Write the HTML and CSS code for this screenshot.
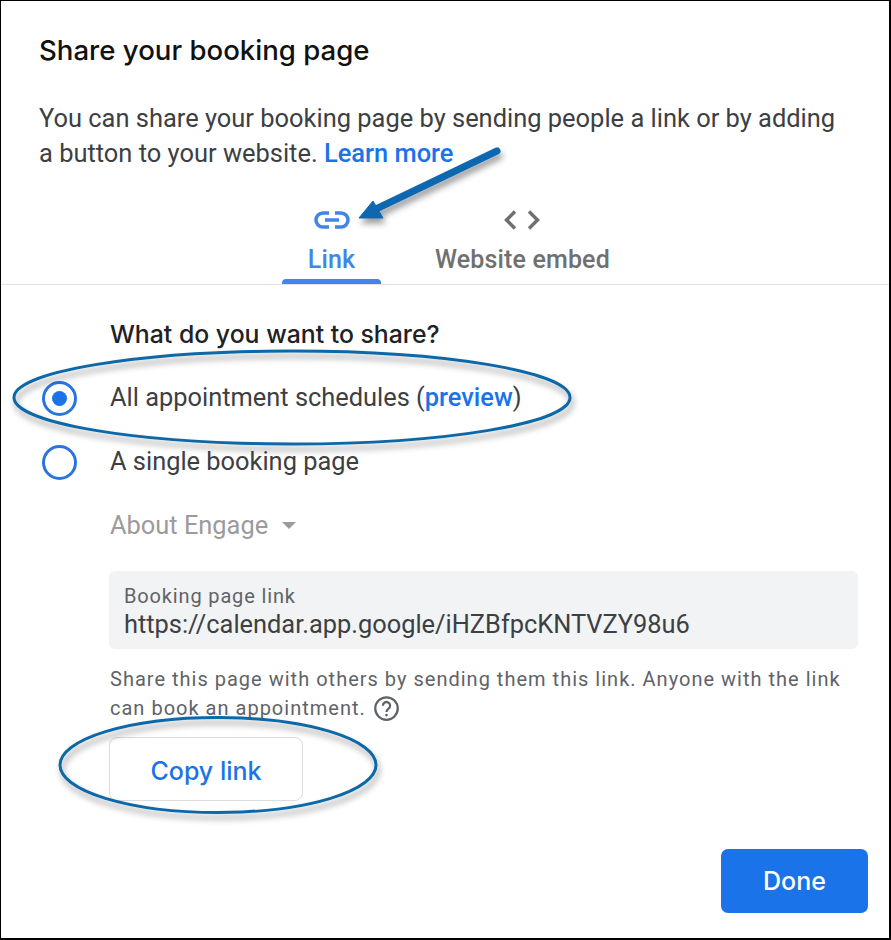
FILE: index.html
```html
<!DOCTYPE html>
<html>
<head>
  <meta charset="utf-8">
  <title>Share your booking page</title>
  <link rel="stylesheet" href="styles.css">
</head>
<body>
  <div class="dialog">
    <div class="intro">
      <h2 class="title">Share your booking page</h2>
      <p class="lead">You can share your booking page by sending people a link or by adding a button to your website. <a class="link" href="#">Learn more</a></p>
    </div>

    <div class="tabs">
      <div class="tab tab-active">
        <svg class="tab-icon" viewBox="0 0 36 20" width="36" height="20">
          <path d="M15 3H9a7 7 0 0 0 0 14h6M21 3h6a7 7 0 0 1 0 14h-6M11 10h14" fill="none" stroke="#4285ea" stroke-width="3.600"/>
        </svg>
        <span>Link</span>
      </div>
      <div class="tab">
        <svg class="tab-icon" viewBox="0 0 36 20" width="36" height="20">
          <path d="M11 1.500L2.500 10l8.500 8.500M25 1.500l8.500 8.500-8.500 8.500" fill="none" stroke="#6f6f6f" stroke-width="3.400"/>
        </svg>
        <span>Website embed</span>
      </div>
    </div>

    <div class="content">
      <h3 class="question">What do you want to share?</h3>

      <div class="option option-first">
        <span class="radio radio-on"></span>
        <span>All appointment schedules (<a class="link" href="#">preview</a>)</span>
      </div>
      <div class="option">
        <span class="radio"></span>
        <span>A single booking page</span>
      </div>

      <div class="select">About Engage <span class="caret"></span></div>

      <div class="link-field">
        <div class="field-label">Booking page link</div>
        <div class="field-value">https://calendar.app.google/iHZBfpcKNTVZY98u6</div>
      </div>

      <p class="hint">Share this page with others by sending them this link. Anyone with the link can book an appointment.
        <svg class="help" viewBox="0 0 24 24" width="27" height="27">
          <circle cx="12" cy="12" r="10" fill="none" stroke="#5f6368" stroke-width="2"/>
          <path d="M8.800 9.500a3.200 3.200 0 1 1 5 2.600c-1.100.8-1.800 1.400-1.800 2.900" fill="none" stroke="#5f6368" stroke-width="2"/>
          <circle cx="12" cy="17.800" r="1.200" fill="#5f6368"/>
        </svg>
      </p>

      <button class="btn-copy">Copy link</button>
    </div>

    <div class="footer">
      <button class="btn-done">Done</button>
    </div>

    <svg class="notes" viewBox="0 0 891 940" width="891" height="940">
      <defs>
        <filter id="soft" x="-20%" y="-40%" width="140%" height="200%">
          <feDropShadow dx="2" dy="5" stdDeviation="3" flood-color="#000" flood-opacity="0.4"/>
        </filter>
      </defs>
      <g filter="url(#soft)">
        <path d="M497 151L376 209" fill="none" stroke="#0f67b0" stroke-width="7" stroke-linecap="round"/>
        <path d="M359 218L373 201L383 218Z" fill="#0f67b0" stroke="#0f67b0" stroke-width="1"/>
        <ellipse cx="292" cy="397.500" rx="278" ry="46.500" fill="none" stroke="#0f67a8" stroke-width="3"/>
        <ellipse cx="218" cy="765" rx="158" ry="47.500" fill="none" stroke="#0f67a8" stroke-width="3"/>
      </g>
    </svg>
  </div>
</body>
</html>
```

FILE: styles.css
```css
body {
  margin: 0;
  background: #fff;
  font-family: Roboto, "Liberation Sans", sans-serif;
}
.dialog {
  position: relative;
  box-sizing: border-box;
  width: 891px;
  height: 940px;
  background: #fff;
  border: solid #000;
  border-width: 1px 2px 2px 1px;
  overflow: hidden;
}
.intro {
  padding: 32px 38px 0;
}
.title {
  margin: 0;
  font-family: Inter, Roboto, sans-serif;
  font-size: 27.6px;
  line-height: 34px;
  font-weight: 500;
  color: #111;
}
.lead {
  width: 805px;
  margin: 34px 0 0;
  font-size: 25.45px;
  line-height: 35px;
  color: #3c4043;
}
.link {
  color: #1a73e8;
  font-weight: 500;
  text-decoration: none;
}
.tabs {
  display: flex;
  margin-top: 15px;
  padding-left: 281px;
  height: 99px;
  box-sizing: border-box;
  border-bottom: 1px solid #dfe1e5;
}
.tab {
  position: relative;
  display: flex;
  flex-direction: column;
  align-items: center;
  font-size: 25px;
  font-weight: 500;
  letter-spacing: 0.15px;
  color: #707070;
  padding-top: 24px;
  margin-right: 54px;
}
.tab-icon {
  flex-shrink: 0;
  margin-bottom: 15px;
}
.tab-active {
  width: 99px;
  color: #4285ea;
}
.tab-active::after {
  content: "";
  position: absolute;
  left: 0;
  right: 0;
  bottom: 0;
  height: 5px;
  background: #4285ea;
  border-radius: 4px 4px 0 0;
}
.content {
  padding: 0 0 0 109px;
}
.question {
  margin: 32px 0 0;
  font-family: Inter, Roboto, sans-serif;
  font-size: 24.8px;
  line-height: 34px;
  font-weight: 500;
  color: #202124;
}
.option {
  position: relative;
  font-size: 25.4px;
  line-height: 34px;
  color: #3c4043;
  margin-top: 30px;
}
.option-first {
  margin-top: 29px;
}
.radio {
  position: absolute;
  left: -68px;
  top: 1px;
  box-sizing: border-box;
  width: 35px;
  height: 35px;
  border: 3px solid #2a74e0;
  border-radius: 50%;
}
.radio-on::after {
  content: "";
  position: absolute;
  left: 7px;
  top: 7px;
  width: 15px;
  height: 15px;
  background: #1a73e8;
  border-radius: 50%;
}
.select {
  margin-top: 30px;
  font-size: 25.4px;
  line-height: 34px;
  color: #9b9b9b;
}
.caret {
  display: inline-block;
  margin-left: 8px;
  vertical-align: 5px;
  border-left: 7px solid transparent;
  border-right: 7px solid transparent;
  border-top: 7px solid #9b9b9b;
}
.link-field {
  width: 749px;
  height: 78px;
  box-sizing: border-box;
  margin: 29px 0 0 -1px;
  padding: 12px 15px 0;
  background: #f1f3f4;
  border-radius: 6px;
}
.field-label {
  font-size: 20px;
  line-height: 26px;
  letter-spacing: 0.85px;
  color: #5f6368;
}
.field-value {
  font-size: 25.4px;
  line-height: 31px;
  color: #3c4043;
}
.hint {
  width: 745px;
  margin: 16px 0 0;
  font-size: 20px;
  line-height: 29px;
  letter-spacing: 1.01px;
  color: #5f6368;
}
.help {
  vertical-align: -7px;
  margin-left: 1px;
}
.btn-copy {
  display: block;
  width: 194px;
  height: 64px;
  margin: 14px 0 0 -1px;
  padding-top: 5px;
  background: #fff;
  border: 1px solid #dadce0;
  border-radius: 8px;
  font-family: Inter, Roboto, sans-serif;
  font-size: 25px;
  font-weight: 500;
  color: #1a73e8;
}
.footer {
  display: flex;
  justify-content: flex-end;
  padding: 48px 21px 0 0;
}
.btn-done {
  width: 147px;
  height: 64px;
  background: #1a73e8;
  border: none;
  border-radius: 7px;
  font-family: Inter, Roboto, sans-serif;
  font-size: 25px;
  font-weight: 500;
  color: #fff;
}
.notes {
  position: absolute;
  left: -1px;
  top: -1px;
  pointer-events: none;
}
```
